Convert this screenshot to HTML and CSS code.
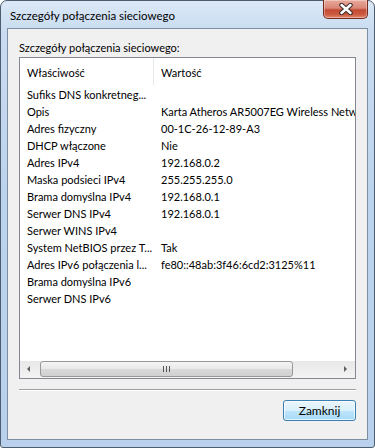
FILE: index.html
```html
<!DOCTYPE html>
<html lang="pl">
<head>
  <meta charset="UTF-8">
  <title>Szczegóły połączenia sieciowego</title>
  <link rel="stylesheet" href="styles.css">
</head>
<body>
  <div class="window">
    <!-- Title bar -->
    <div class="titlebar">
      <div class="caption">Szczegóły połączenia sieciowego</div>
      <div class="close-btn">
        <svg width="16" height="12" viewBox="0 0 16 12">
          <path d="M3.5 2 L12.5 10 M12.5 2 L3.5 10" stroke="#3b2a2a" stroke-width="4.5" stroke-linecap="round"/>
          <path d="M3.5 2 L12.5 10 M12.5 2 L3.5 10" stroke="#fff" stroke-width="2.5" stroke-linecap="round"/>
        </svg>
      </div>
    </div>

    <!-- Client area -->
    <div class="client">
      <div class="group-label">Szczegóły połączenia sieciowego:</div>

      <div class="listview">
        <div class="lv-header">
          <div class="hd-cell hd-prop">Właściwość</div>
          <div class="hd-cell hd-val">Wartość</div>
        </div>
        <div class="lv-body">
          <div class="row"><span class="c1">Sufiks DNS konkretneg...</span><span class="c2"></span></div>
          <div class="row"><span class="c1">Opis</span><span class="c2">Karta Atheros AR5007EG Wireless Network Adapter</span></div>
          <div class="row"><span class="c1">Adres fizyczny</span><span class="c2">00-1C-26-12-89-A3</span></div>
          <div class="row"><span class="c1">DHCP włączone</span><span class="c2">Nie</span></div>
          <div class="row"><span class="c1">Adres IPv4</span><span class="c2">192.168.0.2</span></div>
          <div class="row"><span class="c1">Maska podsieci IPv4</span><span class="c2">255.255.255.0</span></div>
          <div class="row"><span class="c1">Brama domyślna IPv4</span><span class="c2">192.168.0.1</span></div>
          <div class="row"><span class="c1">Serwer DNS IPv4</span><span class="c2">192.168.0.1</span></div>
          <div class="row"><span class="c1">Serwer WINS IPv4</span><span class="c2"></span></div>
          <div class="row"><span class="c1">System NetBIOS przez T...</span><span class="c2">Tak</span></div>
          <div class="row"><span class="c1">Adres IPv6 połączenia l...</span><span class="c2">fe80::48ab:3f46:6cd2:3125%11</span></div>
          <div class="row"><span class="c1">Brama domyślna IPv6</span><span class="c2"></span></div>
          <div class="row"><span class="c1">Serwer DNS IPv6</span><span class="c2"></span></div>
        </div>
        <div class="hscroll">
          <div class="arrow arrow-left"></div>
          <div class="track">
            <div class="thumb"><span class="grip"></span></div>
          </div>
          <div class="arrow arrow-right"></div>
        </div>
      </div>

      <div class="separator"></div>

      <div class="buttons">
        <button class="btn">Zamknij</button>
      </div>
    </div>
  </div>
</body>
</html>
```

FILE: styles.css
```css
* {
  margin: 0;
  padding: 0;
  box-sizing: border-box;
}
body {
  width: 375px;
  height: 448px;
  background: #fff;
  font-family: 'Segoe UI', Lato, sans-serif;
  font-size: 11px;
  color: #000;
  overflow: hidden;
}
.window {
  width: 375px;
  height: 448px;
  display: flex;
  flex-direction: column;
  border: 1px solid #4d5d70;
  border-radius: 7px 7px 3px 3px;
  background: linear-gradient(180deg, #dbe8f6 0px, #c9dcf1 30px, #bcd3ed 200px, #b9d1ec 100%);
}
.titlebar {
  height: 27px;
  display: flex;
  justify-content: space-between;
  align-items: flex-start;
}
.caption {
  font-size: 11.5px;
  padding: 6px 0 0 9px;
  line-height: 17px;
  color: #000;
}
.close-btn {
  width: 45px;
  height: 19px;
  margin-top: -1px;
  margin-right: 6px;
  display: flex;
  justify-content: center;
  align-items: center;
  border: 1px solid #772a20;
  border-top: none;
  border-radius: 0 0 5px 5px;
  background: linear-gradient(180deg, #e9a99c 0%, #d98676 45%, #c34a35 55%, #cc5a40 80%, #e08a70 100%);
  box-shadow: inset 0 0 0 1px rgba(255, 255, 255, 0.35);
}
.client {
  flex: 1;
  margin: 0 6px 7px 6px;
  border: 1px solid #7d8da2;
  background: #f0f0f0;
  padding: 11px 11px 0 11px;
  display: flex;
  flex-direction: column;
}
.group-label {
  line-height: 16px;
  height: 17px;
}
.listview {
  height: 322px;
  border: 1px solid #828790;
  background: #fff;
  display: flex;
  flex-direction: column;
  overflow: hidden;
}
.lv-header {
  height: 27px;
  display: flex;
  flex-shrink: 0;
  background: #fff;
}
.hd-cell {
  padding: 7px 0 0 7px;
  line-height: 16px;
}
.hd-prop {
  width: 134px;
  border-right: 1px solid #e3e6ea;
}
.hd-val {
  flex: 1;
}
.lv-body {
  flex: 1;
  padding-top: 1px;
}
.row {
  height: 17px;
  line-height: 17px;
  display: flex;
  white-space: nowrap;
  overflow: hidden;
}
.c1 {
  width: 134px;
  flex-shrink: 0;
  padding-left: 7px;
}
.c2 {
  padding-left: 7px;
}
.hscroll {
  height: 17px;
  flex-shrink: 0;
  display: flex;
  align-items: center;
  background: linear-gradient(180deg, #e8e8e8, #f3f3f3);
}
.arrow {
  width: 19px;
  height: 17px;
  position: relative;
}
.arrow-left::before,
.arrow-right::before {
  content: "";
  position: absolute;
  top: 5px;
  border-top: 3px solid transparent;
  border-bottom: 3px solid transparent;
}
.arrow-left::before {
  left: 7px;
  border-right: 3px solid #606060;
}
.arrow-right::before {
  left: 8px;
  border-left: 3px solid #606060;
}
.track {
  flex: 1;
  height: 17px;
  padding: 0 43px 0 1px;
}
.thumb {
  height: 16px;
  border: 1px solid #989898;
  border-radius: 3px;
  background: linear-gradient(180deg, #f4f4f4 0%, #e9e9e9 50%, #dadada 51%, #d0d0d0 100%);
  display: flex;
  justify-content: center;
  align-items: center;
}
.grip {
  width: 7px;
  height: 6px;
  background: repeating-linear-gradient(90deg, #555 0px, #555 1px, transparent 1px, transparent 3px);
}
.separator {
  margin-top: 10px;
  height: 2px;
  border-top: 1px solid #a0a0a0;
  border-bottom: 1px solid #fff;
}
.buttons {
  display: flex;
  justify-content: flex-end;
  padding-top: 9px;
}
.btn {
  width: 73px;
  height: 21px;
  font-family: 'Segoe UI', Lato, sans-serif;
  font-size: 12px;
  color: #000;
  border: 1px solid #3c7fb1;
  border-radius: 3px;
  background: linear-gradient(180deg, #eaf6fd 0%, #d9f0fc 50%, #bee6fd 51%, #a7d9f5 100%);
  box-shadow: inset 0 0 0 1px rgba(255, 255, 255, 0.7);
}
```
